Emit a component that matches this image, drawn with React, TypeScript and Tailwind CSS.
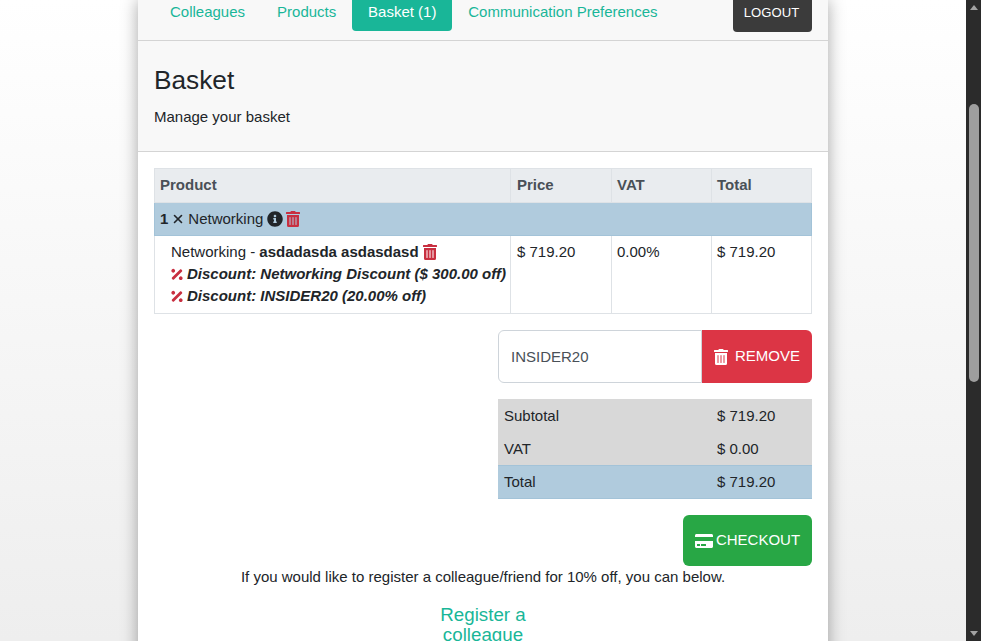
import { X } from "lucide-react";
import { FaCreditCard, FaInfoCircle, FaPercentage, FaTrashAlt } from "react-icons/fa";

const tabs = ["Colleagues", "Products", "Basket (1)", "Communication Preferences"];

const Scrollbar: React.FC = () => {
  return (
    <div className="flex h-full w-[15px] shrink-0 flex-col items-center bg-[#2b2b2b]">
      <div className="mt-[5px] h-0 w-0 border-x-[4px] border-b-[5px] border-x-transparent border-b-[#a3a3a3]" />
      <div className="mt-[94px] h-[278px] w-[10px] rounded-full bg-[#9e9e9e]" />
      <div className="mb-[5px] mt-auto h-0 w-0 border-x-[4px] border-t-[5px] border-x-transparent border-t-[#a3a3a3]" />
    </div>
  );
};

const NavBar: React.FC = () => {
  return (
    <nav className="flex h-[41px] items-start justify-between border-b border-[#d4d4d4] bg-[#f8f8f8] px-4">
      <div className="flex">
        {tabs.map((tab) => (
          <a
            key={tab}
            className={
              tab === "Basket (1)"
                ? "flex h-[31px] w-[100px] items-center justify-center rounded-b bg-[#19b698] pb-[7px] text-white"
                : "flex h-[31px] items-center px-4 pb-[7px] text-[#19b698]"
            }
          >
            {tab}
          </a>
        ))}
      </div>
      <button className="h-[32px] w-[79px] rounded-b bg-[#3b3b3b] pb-[7px] pr-[2px] text-[13.125px] text-white">LOGOUT</button>
    </nav>
  );
};

const BasketTable: React.FC = () => {
  return (
    <table className="w-[658px] table-fixed border-collapse text-[#212529]">
      <thead>
        <tr className="h-[34px] bg-[#e9ecef] text-left font-bold text-[#495057]">
          <th className="w-[356px] border border-[#dee2e6] px-[5px]">Product</th>
          <th className="w-[101px] border border-[#dee2e6] px-[6px]">Price</th>
          <th className="w-[100px] border border-[#dee2e6] px-[5px]">VAT</th>
          <th className="border border-[#dee2e6] px-[5px]">Total</th>
        </tr>
      </thead>
      <tbody>
        <tr className="h-[33px] bg-[#b0cbdd]">
          <td colSpan={4} className="border border-[#a3c3d8] px-[5px]">
            <div className="flex items-center">
              <b>1</b>
              <X className="mx-[3px] h-[14px] w-[14px] shrink-0" strokeWidth={2.75} />
              <span>Networking</span>
              <FaInfoCircle className="ml-[4px] h-[16px] w-[16px] shrink-0" />
              <FaTrashAlt className="ml-[3px] h-[16px] w-[14px] shrink-0 text-[#c82f40]" />
            </div>
          </td>
        </tr>
        <tr className="h-[78px] align-top">
          <td className="border border-[#dee2e6] pb-[4px] pl-[16px] pr-[4px] pt-[5px] leading-[22px]">
            <div className="flex items-center">
              <span className="whitespace-pre">Networking - </span>
              <b>asdadasda asdasdasd</b>
              <FaTrashAlt className="ml-[4px] h-[16px] w-[14px] shrink-0 text-[#c82f40]" />
            </div>
            <div className="flex items-center font-bold italic">
              <FaPercentage className="mr-[4px] h-[15px] w-[12px] shrink-0 text-[#c82f40]" />
              <span className="whitespace-nowrap">Discount: Networking Discount ($ 300.00 off)</span>
            </div>
            <div className="flex items-center font-bold italic">
              <FaPercentage className="mr-[4px] h-[15px] w-[12px] shrink-0 text-[#c82f40]" />
              <span>Discount: INSIDER20 (20.00% off)</span>
            </div>
          </td>
          <td className="border border-[#dee2e6] px-[6px] pt-[5px] leading-[22px]">$ 719.20</td>
          <td className="border border-[#dee2e6] px-[5px] pt-[5px] leading-[22px]">0.00%</td>
          <td className="border border-[#dee2e6] px-[5px] pt-[5px] leading-[22px]">$ 719.20</td>
        </tr>
      </tbody>
    </table>
  );
};

const Totals: React.FC = () => {
  return (
    <div className="w-[314px] text-[#212529]">
      <div className="flex h-[33px] items-center bg-[#d8d8d8] pt-[2px]">
        <span className="w-[213px] pl-[6px]">Subtotal</span>
        <span className="pl-[6px]">$ 719.20</span>
      </div>
      <div className="flex h-[33px] items-center bg-[#d8d8d8] pt-[2px]">
        <span className="w-[213px] pl-[6px]">VAT</span>
        <span className="pl-[6px]">$ 0.00</span>
      </div>
      <div className="flex h-[34px] items-center border-y border-[#a3c3d8] bg-[#b0cbdd]">
        <span className="w-[213px] pl-[6px]">Total</span>
        <span className="pl-[6px]">$ 719.20</span>
      </div>
    </div>
  );
};

export default function App() {
  return (
    <div className="flex h-screen overflow-hidden font-['Liberation_Sans',Arial,sans-serif] text-[15px] text-[#212529]">
      <main className="h-full flex-1 overflow-hidden bg-gradient-to-b from-white to-[#eeeeee]">
        <div className="mx-auto h-[700px] w-[690px] bg-white shadow-[0_0_16px_rgba(0,0,0,0.35)]">
          <NavBar />
          <header className="h-[111px] border-b border-[#d4d4d4] bg-[#f8f8f8] px-4 pt-[22px]">
            <h1 className="text-[26.25px] leading-[34px] text-[#212529]">Basket</h1>
            <p className="mt-[8px] leading-6">Manage your basket</p>
          </header>
          <section className="px-4 pt-4">
            <BasketTable />
            <div className="mt-4 flex justify-end">
              <div className="flex h-[53px] w-[314px]">
                <div className="flex flex-1 items-center rounded-l-md border border-[#ced4da] bg-white pl-3 pt-[2px] text-[#495057]">
                  INSIDER20
                </div>
                <button className="flex w-[110px] items-center justify-center gap-[7px] rounded-r-md bg-[#dc3545] text-white">
                  <FaTrashAlt className="h-[16px] w-[14px]" />
                  REMOVE
                </button>
              </div>
            </div>
            <div className="mt-4 flex justify-end">
              <Totals />
            </div>
            <div className="mt-4 flex justify-end">
              <button className="flex h-[51px] w-[129px] items-center justify-center gap-[3px] rounded-md bg-[#28a745] text-white">
                <FaCreditCard className="h-[16px] w-[18px]" />
                CHECKOUT
              </button>
            </div>
            <p className="text-center leading-[22px]">If you would like to register a colleague/friend for 10% off, you can below.</p>
            <a className="mx-auto mt-[17px] block w-[120px] text-center text-[18.75px] leading-[20px] text-[#19b698]">
              Register a colleague
            </a>
          </section>
        </div>
      </main>
      <Scrollbar />
    </div>
  );
}
